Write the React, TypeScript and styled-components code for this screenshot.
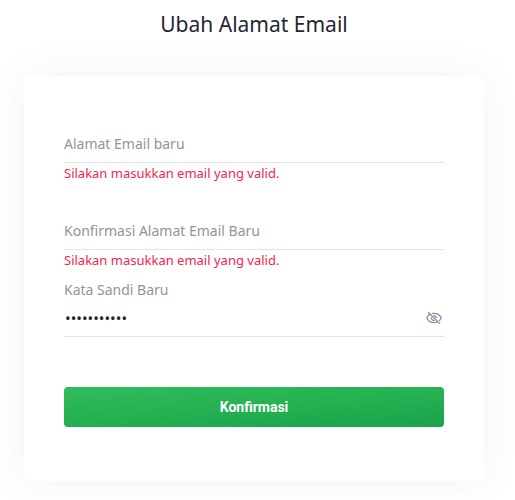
import React, { useState } from "react";
import styled, { createGlobalStyle } from "styled-components";

const GlobalStyle = createGlobalStyle`
  *, *::before, *::after { box-sizing: border-box; }
  body {
    margin: 0;
    background: #fff;
    color: #212529;
    font-family: "Noto Sans", "Open Sans", sans-serif;
  }
`;

const Page = styled.main`
  padding: 8px 31px 19px 24px;
`;

const Title = styled.h1`
  margin: 0 0 36px;
  font-size: 21px;
  font-weight: 400;
  line-height: 32px;
  text-align: center;
  color: #1f2733;
`;

const Card = styled.form`
  display: flex;
  flex-direction: column;
  padding: 50px 40px 54px;
  border-radius: 6px;
  background: #fff;
  box-shadow: 0 0 40px rgba(62, 87, 130, 0.07);
`;

const Field = styled.div<{ $gap: number }>`
  display: flex;
  flex-direction: column;
  margin-bottom: ${({ $gap }) => $gap}px;
`;

const Label = styled.label`
  font-size: 14px;
  line-height: 20px;
  color: #949494;
`;

const Control = styled.div`
  display: flex;
  align-items: center;
  height: 37px;
  border-bottom: 1px solid #e2e2e2;
`;

const Input = styled.input`
  flex: 1;
  min-width: 0;
  height: 36px;
  padding: 0 0 2px;
  border: 0;
  outline: 0;
  background: transparent;
  color: #212529;
  font-family: inherit;
  font-size: 14px;

  &::placeholder { color: #949494; opacity: 1; }
`;

const PasswordInput = styled(Input)`
  padding: 0 0 0 1px;
  font-size: 15px;
`;

const ErrorText = styled.p`
  margin: 0;
  font-size: 13px;
  line-height: 20px;
  color: #f3264c;
`;

const IconButton = styled.button`
  display: flex;
  padding: 2px;
  border: 0;
  background: none;
  color: #8290a3;
  cursor: pointer;
`;

const Submit = styled.button`
  height: 40px;
  border: 0;
  border-radius: 4px;
  background: linear-gradient(176deg, #30bd5b, #1aa34a);
  color: #fff;
  font-family: "Roboto", sans-serif;
  font-size: 14px;
  font-weight: 700;
  cursor: pointer;
`;

function EyeOffIcon() {
  return (
    <svg width="16" height="16" viewBox="0 0 16 16" fill="none" stroke="currentColor" strokeWidth="1.3" aria-hidden="true">
      <path d="M4.300 3.900C2.800 4.800 1.500 6.300.800 8c1.200 2.900 3.900 4.600 7.200 4.600 1.100 0 2.200-.2 3.200-.6M6.200 3.500c.6-.1 1.200-.1 1.800-.1 3.300 0 6 1.700 7.200 4.600-.5 1.200-1.300 2.200-2.300 3" />
      <path d="M7.200 5.200A2.800 2.800 0 0 1 10.700 8.700L7.200 5.200z" fill="currentColor" stroke="none" />
      <path d="M5.500 7.300a2.600 2.600 0 0 0 3.200 3.200" />
      <path d="M2.300 2.300l11.400 11.400" />
    </svg>
  );
}

const emailError = "Silakan masukkan email yang valid.";

export default function App() {
  const [visible, setVisible] = useState(false);
  return (
    <>
      <GlobalStyle />
      <Page>
        <Title>Ubah Alamat Email</Title>
        <Card noValidate onSubmit={(e) => e.preventDefault()}>
          <Field $gap={30}>
            <Control>
              <Input type="email" placeholder="Alamat Email baru" aria-label="Alamat Email baru" aria-describedby="email-error" />
            </Control>
            <ErrorText id="email-error">{emailError}</ErrorText>
          </Field>
          <Field $gap={10}>
            <Control>
              <Input type="email" placeholder="Konfirmasi Alamat Email Baru" aria-label="Konfirmasi Alamat Email Baru" aria-describedby="confirm-error" />
            </Control>
            <ErrorText id="confirm-error">{emailError}</ErrorText>
          </Field>
          <Field $gap={50}>
            <Label htmlFor="password">Kata Sandi Baru</Label>
            <Control>
              <PasswordInput id="password" type={visible ? "text" : "password"} defaultValue="katasandi12" />
              <IconButton type="button" aria-label="Tampilkan kata sandi" onClick={() => setVisible(!visible)}>
                <EyeOffIcon />
              </IconButton>
            </Control>
          </Field>
          <Submit type="submit">Konfirmasi</Submit>
        </Card>
      </Page>
    </>
  );
}
